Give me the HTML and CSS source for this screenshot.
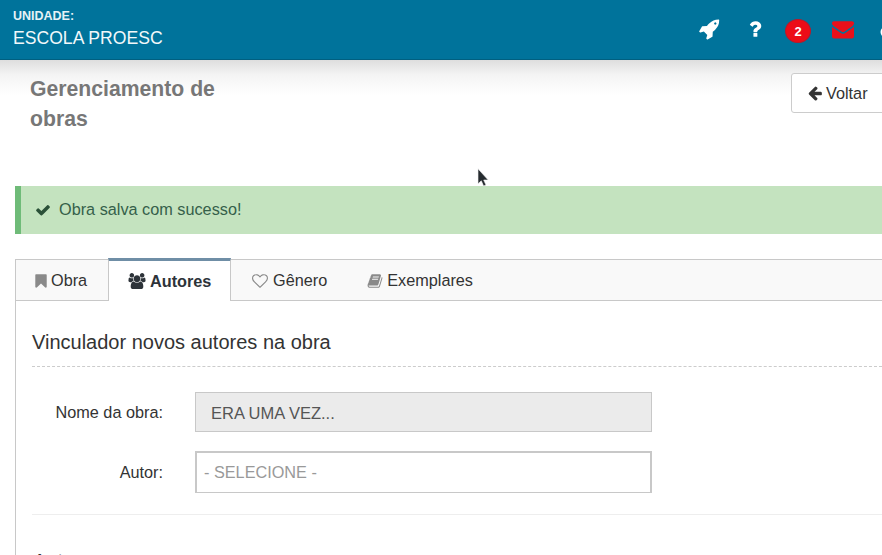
FILE: index.html
```html
<!DOCTYPE html>
<html lang="pt-BR">
<head>
<meta charset="utf-8">
<title>Gerenciamento de obras</title>
<link rel="stylesheet" href="styles.css">
</head>
<body>
<div class="page">
  <header class="topbar">
    <div class="unit">
      <div class="unit-label">UNIDADE:</div>
      <div class="unit-name">ESCOLA PROESC</div>
    </div>
    <nav class="top-icons">
      <svg class="top-ic" viewBox="0 0 1792 1792"><path fill="#fff" d="M1504 448q0-40-28-68t-68-28-68 28-28 68 28 68 68 28 68-28 28-68zm224-288q0 249-75.500 430.500t-253.500 360.500q-81 80-195 176l-20 379q-2 16-16 26l-384 224q-7 4-16 4-12 0-23-9l-64-64q-13-14-8-32l85-276-281-281-276 85q-3 1-9 1-14 0-23-9l-64-64q-17-19-5-39l224-384q10-14 26-16l379-20q96-114 176-195 188-187 358-258t431-71q14 0 24 9.500t10 22.500z"/></svg>
      <svg class="top-ic ic-help" viewBox="0 0 1792 1792"><path fill="#fff" d="M1088 1256v240q0 16-12 28t-28 12h-240q-16 0-28-12t-12-28v-240q0-16 12-28t28-12h240q16 0 28 12t12 28zm316-600q0 54-15.500 101t-35 76.500-55 59.500-57.500 43.500-61 35.500q-41 23-68.500 65t-27.500 67q0 17-12 32.500t-28 15.500h-240q-15 0-25.500-18.500t-10.500-37.500v-45q0-83 65-156.500t143-108.500q59-27 84-56t25-76q0-42-46.500-74t-107.500-32q-65 0-108 29-35 25-107 115-13 16-31 16-12 0-25-8l-164-125q-13-10-15.500-25t5.500-28q160-266 464-266 80 0 161 31t146 83 106 127.500 41 158.500z"/></svg>
      <span class="badge">2</span>
      <svg class="top-ic ic-mail" viewBox="0 0 1792 1792"><path fill="#e8101a" d="M1792 710v794q0 66-47 113t-113 47h-1472q-66 0-113-47t-47-113v-794q44 49 101 87 362 246 497 345 57 42 92.500 65.500t94.500 48 110 24.500h2q51 0 110-24.500t94.500-48 92.500-65.500q170-123 498-345 57-39 100-87zm0-294q0 79-49 151t-122 123q-376 261-468 325-10 7-42.500 30.500t-54 38-52 32.500-57.500 27-50 9h-2q-23 0-50-9t-57.500-27-52-32.500-54-38-42.500-30.500q-91-64-262-182.500t-205-142.500q-62-42-117-115.500t-55-136.500q0-78 41.500-130t118.500-52h1472q65 0 112.500 47t47.500 113z"/></svg>
      <svg class="top-ic ic-user" viewBox="0 0 16 18"><circle cx="8" cy="5" r="4.500" fill="#fff"/></svg>
    </nav>
  </header>

  <section class="page-head">
    <h1 class="title">Gerenciamento de obras</h1>
    <button class="btn-back" type="button">
      <svg class="ic16" viewBox="0 0 1792 1792"><path fill="#333" d="M1664 896v128q0 53-32.500 90.500t-84.500 37.500h-704l293 294q38 36 38 90t-38 90l-75 76q-37 37-90 37-52 0-91-37l-651-652q-37-37-37-90 0-52 37-91l651-650q38-38 91-38 52 0 90 38l75 74q38 38 38 91t-38 91l-293 293h704q52 0 84.500 37.500t32.500 90.500z"/></svg>
      <span>Voltar</span>
    </button>
  </section>

  <div class="alert">
    <svg class="ic16" viewBox="0 0 1792 1792"><path fill="#2b5138" d="M1671 566q0 40-28 68l-724 724-136 136q-28 28-68 28t-68-28l-136-136-362-362q-28-28-28-68t28-68l136-136q28-28 68-28t68 28l294 295 656-657q28-28 68-28t68 28l136 136q28 28 28 68z"/></svg>
    <span>Obra salva com sucesso!</span>
  </div>

  <div class="panel">
    <ul class="tabs">
      <li class="tab tab-obra">
        <svg class="ic16" viewBox="0 0 1792 1792"><path fill="#8a8a8a" d="M1420 128q23 0 44 9 33 13 52.500 41t19.500 62v1289q0 34-19.500 62t-52.500 41q-19 8-44 8-48 0-83-32l-441-424-441 424q-36 33-83 33-23 0-44-9-33-13-52.500-41t-19.500-62v-1289q0-34 19.500-62t52.500-41q21-9 44-9h1048z"/></svg>
        <span>Obra</span>
      </li>
      <li class="tab tab-active">
        <svg class="ic-users" viewBox="0 0 1920 1792"><path fill="#2d3339" d="M593 896q-162 5-265 128h-134q-82 0-138-40.500t-56-118.500q0-353 124-353 6 0 43.500 21t97.500 42.500 119 21.500q67 0 133-23-5 37-5 66 0 139 81 256zm1071 637q0 120-73 189.500t-194 69.500h-874q-121 0-194-69.500t-73-189.500q0-53 3.500-103.500t14-109 26.500-108.500 43-97.500 62-81 85.500-53.500 111.500-20q10 0 43 21.500t73 48 107 48 135 21.500 135-21.500 107-48 73-48 43-21.500q61 0 111.500 20t85.500 53.500 62 81 43 97.500 26.500 108.500 14 109 3.500 103.500zm-1024-1277q0 106-75 181t-181 75-181-75-75-181 75-181 181-75 181 75 75 181zm704 384q0 159-112.500 271.500t-271.500 112.500-271.500-112.500-112.500-271.500 112.500-271.500 271.500-112.500 271.500 112.500 112.500 271.500zm576 225q0 78-56 118.500t-138 40.500h-134q-103-123-265-128 81-117 81-256 0-29-5-66 66 23 133 23 59 0 119-21.500t97.500-42.500 43.500-21q124 0 124 353zm-128-609q0 106-75 181t-181 75-181-75-75-181 75-181 181-75 181 75 75 181z"/></svg>
        <span>Autores</span>
      </li>
      <li class="tab tab-genero">
        <svg class="ic16" viewBox="0 0 1792 1792"><path fill="#8a8a8a" d="M1664 596q0-81-21.500-143t-55-98.500-81.500-59.500-94-31-98-8-112 25.500-110.500 64-86.500 72-60 61.500q-18 22-49 22t-49-22q-24-28-60-61.500t-86.500-72-110.500-64-112-25.500-98 8-94 31-81.500 59.500-55 98.500-21.500 143q0 168 187 355l581 560 580-559q188-188 188-356zm128 0q0 221-229 450l-623 600q-18 18-44 18t-44-18l-624-602q-10-8-27.500-26t-55.500-65.500-68-97.500-53.500-121-23.500-138q0-220 127-344t351-124q62 0 126.500 21.500t120 58 95.500 68.500 76 68q36-36 76-68t95.500-68.500 120-58 126.500-21.500q224 0 351 124t127 344z"/></svg>
        <span>Gênero</span>
      </li>
      <li class="tab tab-exemplares">
        <svg class="ic16" viewBox="0 0 1792 1792"><path fill="#8a8a8a" d="M1703 478q40 57 18 129l-275 906q-19 64-76.500 107.500t-122.500 43.500h-923q-77 0-148.500-53.500t-99.500-131.500q-24-67-2-127 0-4 3-27t4-37q1-8-3-21.500t-3-19.500q2-11 8-21t16.500-23.500 16.500-23.500q23-38 45-91.500t30-91.500q3-10 .5-30t-.5-28q3-11 17-28t17-23q21-36 42-92t25-90q1-9-2.500-32t.5-28q4-13 22-30.500t22-22.500q19-26 42.500-84.500t27.500-96.500q1-8-3-25.500t-2-26.500q2-8 9-18t18-23 17-21q8-12 16.500-30.500t15-35 16-36 19.500-32 26.500-23.500 36-11.500 47.500 5.500l-1 3q38-9 51-9h761q74 0 114 56t18 130l-274 906q-36 119-71.500 153.500t-128.500 34.500h-869q-27 0-38 15-11 16-1 43 24 70 144 70h923q29 0 56-15.500t35-41.500l300-987q7-22 5-57 38 15 59 43zm-1064 2q-4 13 2 22.500t20 9.500h608q13 0 25.500-9.500t16.500-22.500l21-64q4-13-2-22.500t-20-9.500h-608q-13 0-25.500 9.500t-16.500 22.500zm-83 256q-4 13 2 22.500t20 9.500h608q13 0 25.500-9.500t16.500-22.500l21-64q4-13-2-22.500t-20-9.500h-608q-13 0-25.500 9.500t-16.500 22.500z"/></svg>
        <span>Exemplares</span>
      </li>
    </ul>

    <div class="panel-body">
      <h2 class="section-title">Vinculador novos autores na obra</h2>
      <form class="form">
        <div class="field">
          <label class="field-label">Nome da obra:</label>
          <div class="input input-disabled">ERA UMA VEZ...</div>
        </div>
        <div class="field field-select">
          <label class="field-label">Autor:</label>
          <div class="input input-select">- SELECIONE -</div>
        </div>
      </form>
      <hr class="rule">
      <h3 class="sub-title">Autores</h3>
    </div>
  </div>
</div>

<svg class="cursor" width="14" height="20" viewBox="0 0 14 20"><path fill="#262b2f" stroke="#f4f4f4" stroke-width=".6" d="M1 .8v15l3.300-3 2.300 5.200 2.400-1-2.300-5h4.500z"/></svg>
</body>
</html>
```
FILE: styles.css
```css
* { box-sizing: border-box; }
html, body {
  margin: 0;
  height: 555px;
  overflow: hidden;
  background: #fff;
}
body {
  font-family: "Liberation Sans", Arial, sans-serif;
  font-size: 16.25px;
  color: #333;
}
.page {
  width: 882px;
  height: 555px;
  overflow: hidden;
  background: linear-gradient(#dedede 60px, #f4f4f4 75px, #fff 95px);
}
.topbar {
  height: 60px;
  background: #00739b;
  border-bottom: 1px solid #005f80;
  display: flex;
  justify-content: space-between;
  color: #fff;
}
.unit { padding: 9px 0 0 13px; }
.unit-label { font-size: 12.5px; font-weight: 700; line-height: 14px; color: #e6f2f6; }
.unit-name { font-size: 17.6px; line-height: 20px; margin-top: 5px; color: #f2f8fa; }
.top-icons {
  display: flex;
  align-items: flex-start;
  width: 184px;
  flex: none;
  overflow: hidden;
}
.top-ic { width: 22px; height: 22px; margin-top: 18px; flex: none; }
.ic-help { margin-left: 24px; }
.ic-mail { margin-left: 21px; }
.ic-user { margin: 26px 0 0 21px; }
.badge {
  width: 26px;
  height: 24px;
  margin: 19px 0 0 19px;
  border-radius: 50%;
  background: #ec0c17;
  border: 1px solid #b81a2a;
  font-size: 13px;
  font-weight: 700;
  line-height: 23px;
  text-align: center;
  flex: none;
}
.ic16 { width: 16px; height: 16px; flex: none; }

.page-head {
  display: flex;
  justify-content: space-between;
  align-items: flex-start;
  height: 126px;
}
.title {
  margin: 14px 0 0 30px;
  width: 220px;
  font-size: 21.2px;
  line-height: 30px;
  font-weight: 700;
  color: #777;
}
.btn-back {
  width: 100px;
  height: 40px;
  margin-top: 13px;
  margin-right: -9px;
  padding: 0 0 0 15px;
  display: flex;
  align-items: center;
  gap: 3px;
  background: #fff;
  border: 1px solid #ccc;
  border-radius: 3px;
  font: 16.25px "Liberation Sans", Arial, sans-serif;
  color: #333;
}
.alert {
  margin-left: 15px;
  height: 48px;
  background: #c4e3bf;
  border-left: 6px solid #6fbb78;
  color: #35604a;
  display: flex;
  align-items: center;
  gap: 8px;
  padding: 0 0 1px 14px;
}
.panel {
  margin: 25px 0 0 15px;
  border-left: 1px solid #c8c8c8;
}
.tabs {
  list-style: none;
  margin: 0;
  padding: 0;
  height: 42px;
  display: flex;
  background: #f9f9f9;
  border-top: 1px solid #c8c8c8;
  border-bottom: 1px solid #c8c8c8;
}
.tab {
  height: 40px;
  padding-top: 1px;
  display: flex;
  align-items: center;
  gap: 4px;
  color: #333;
}
.tab-obra { width: 92px; padding-left: 17px; gap: 2px; }
.tab-active {
  width: 123px;
  height: 43px;
  margin: -2px 0 -1px 0;
  padding: 0 0 0 19px;
  background: #fff;
  border-top: 3px solid #6f8ea6;
  border-left: 1px solid #c8c8c8;
  border-right: 1px solid #c8c8c8;
  font-weight: 700;
  color: #2d3339;
}
.ic-users { width: 18px; height: 16px; flex: none; }
.tab-genero { margin-left: 21px; gap: 5px; }
.tab-exemplares { margin-left: 40px; }
.panel-body { padding: 0 0 0 16px; }
.section-title {
  margin: 0;
  height: 66px;
  padding-top: 29px;
  font-size: 20px;
  line-height: 24px;
  font-weight: 400;
  color: #333;
  border-bottom: 1px dashed #ccc;
}
.form { padding-top: 25px; }
.field { display: flex; align-items: center; }
.field-select { margin-top: 19px; }
.field-label {
  width: 131px;
  padding-top: 1px;
  text-align: right;
  color: #333;
}
.input {
  width: 457px;
  margin-left: 32px;
  flex: none;
}
.input-disabled {
  height: 40px;
  line-height: 40px;
  padding-left: 15px;
  background: #ebebeb;
  border: 1px solid #c8c8c8;
  color: #555;
  font-size: 16.5px;
}
.input-select {
  height: 42px;
  line-height: 39px;
  padding-left: 7px;
  background: #fff;
  border: 2px solid #c8c8c8;
  border-bottom-width: 1px;
  color: #999;
}
.rule {
  margin: 21px 0 0;
  border: 0;
  border-top: 1px solid #eee;
}
.sub-title {
  margin: 34px 0 0 1px;
  font-size: 20px;
  line-height: 24px;
  font-weight: 400;
  color: #333;
}
.cursor {
  position: absolute;
  left: 477px;
  top: 168px;
}
```
